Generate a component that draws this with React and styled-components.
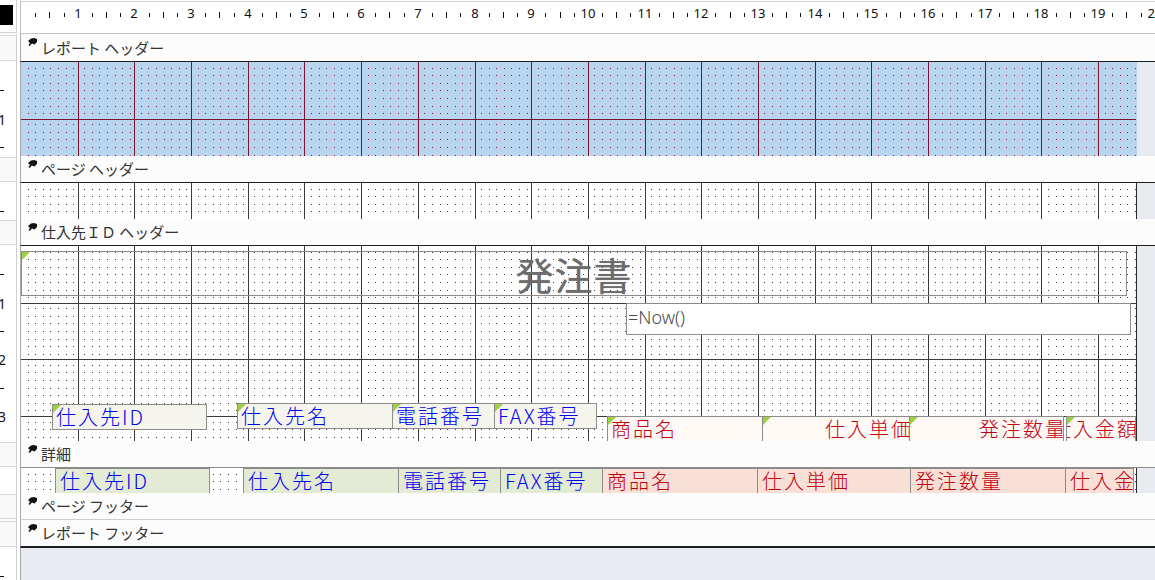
import React, { useMemo } from 'react';
import styled, { createGlobalStyle } from 'styled-components';

const CM = 56.69;
const SURFACE_W = 1115;
const JP = `"Noto Sans CJK JP", "Noto Sans", sans-serif`;
const UI = `"Noto Sans", "Liberation Sans", sans-serif`;

const GlobalStyle = createGlobalStyle`
  html, body { margin: 0; padding: 0; background: #fff; }
  body { overflow: hidden; }
`;

const Page = styled.div`
  width: 1155px;
  height: 580px;
  overflow: hidden;
  display: flex;
  flex-direction: column;
  background: #fff;
  font-family: ${UI};
`;

const Row = styled.div`
  flex: none;
  height: ${p => p.$h}px;
  display: grid;
  grid-template-columns: 17px 1fr;
  column-gap: 3px;
`;

const Corner = styled.div`
  height: 33px;
  box-sizing: border-box;
  border-right: 1px solid #d0d0d0;
  border-bottom: 1px solid #d0d0d0;
  padding-top: 5px;
`;

const CornerMark = styled.div`
  width: 13px;
  height: 20px;
  background: #000;
`;

const TopRuler = styled.div`
  position: relative;
  margin-top: 1px;
  height: 33px;
  box-sizing: border-box;
  border-top: 1px solid #d4d4d4;
  border-bottom: 1px solid #c6c6c6;
  border-left: 1px solid #bdbdbd;
  overflow: hidden;
  background: #fff;
`;

const RulerNum = styled.span`
  position: absolute;
  top: 3px;
  transform: translateX(-50%);
  font-size: 13px;
  line-height: 16px;
  color: #111;
`;

const TickLayer = styled.svg`
  position: absolute;
  left: 0;
  top: 0;
`;

const LeftCell = styled.div`
  position: relative;
  overflow: hidden;
  border-right: 1px solid #d0d0d0;
  display: flex;
  flex-direction: column;
  background: #fff;
`;

const RulerBox = styled.div`
  flex: 1;
  margin: 1px 0;
  border-top: 1px solid #d8d8d8;
  border-bottom: 1px solid #d8d8d8;
  background: #f8f8f8;
`;

const RulerDash = styled.span`
  position: absolute;
  left: 0;
  width: 4px;
  height: 1px;
  background: #111;
`;

const RulerDigit = styled.span`
  position: absolute;
  left: 2px;
  transform: translate(-50%, -45%);
  font-size: 14px;
  line-height: 14px;
  color: #111;
`;

const Bar = styled.div`
  height: ${p => p.$h}px;
  border-left: 1px solid #a8a8a8;
  border-bottom: ${p => p.$lw}px solid ${p => p.$line};
  background: #fcfcfc;
  display: flex;
  align-items: center;
  padding-left: 7px;
  gap: 3px;
  font-family: ${JP};
  font-size: 15px;
  color: #333;
  white-space: nowrap;
`;

const IconSvg = styled.svg`
  flex: none;
  align-self: flex-start;
  margin-top: 4px;
`;

const BarTitle = styled.span`
  line-height: 20px;
`;

const BodyLane = styled.div`
  display: flex;
  min-width: 0;
  border-left: 1px solid #a8a8a8;
`;

const Surface = styled.div`
  position: relative;
  flex: none;
  width: ${SURFACE_W + 1}px;
  box-sizing: border-box;
  overflow: hidden;
  background: ${p => p.$bg};
  border-right: 1px solid ${p => p.$edge};
`;

const Gutter = styled.div`
  flex: 1;
  background: #e8ebf0;
`;

const GrayLane = styled.div`
  border-left: 1px solid #a8a8a8;
  background: #e8ebf0;
`;

const GridSvg = styled.svg`
  position: absolute;
  left: 0;
  top: 0;
  shape-rendering: crispEdges;
`;

const Control = styled.div`
  position: absolute;
  left: ${p => p.$x}px;
  top: ${p => p.$y}px;
  width: ${p => p.$w}px;
  height: ${p => p.$h}px;
  box-sizing: border-box;
  display: flex;
  align-items: center;
  overflow: hidden;
  white-space: nowrap;
  border: 1px solid #8c8c8c;
  font-family: ${JP};
`;

const FieldLabel = styled(Control)`
  font-size: 20px;
  font-weight: 300;
  line-height: 1;
  letter-spacing: 2px;
  padding-left: 3px;
  color: ${p => (p.$tone === 'red' ? '#c00010' : '#0000f0')};
  background: ${p => (p.$tone === 'red' ? '#fff9f6' : '#f5f5ee')};
  justify-content: ${p => (p.$right ? 'flex-end' : 'flex-start')};
`;

const FieldBox = styled(Control)`
  font-size: 20px;
  font-weight: 300;
  line-height: 1;
  letter-spacing: 2px;
  padding-left: 4px;
  color: ${p => (p.$tone === 'red' ? '#c00010' : '#0000f0')};
  background: ${p => (p.$tone === 'red' ? '#f9e0d7' : '#e3ebd5')};
`;

const LabelText = styled.span`
  flex: none;
  margin-right: ${p => (p.$right ? '-4px' : '0')};
`;

const TitleLabel = styled(Control)`
  justify-content: center;
  background: transparent;
  font-size: 38px;
  line-height: 1;
  letter-spacing: 1px;
  color: #6c6c6c;
  text-shadow: 0 0 1px rgba(80, 80, 80, 0.55);
`;

const ExprBox = styled(Control)`
  align-items: flex-start;
  padding: 1px 0 0 1px;
  background: #fff;
  font-family: ${UI};
  font-size: 18px;
  font-weight: 300;
  line-height: 24px;
  color: #4a4a4a;
`;

const Tag = styled.span`
  position: absolute;
  left: 0;
  top: 0;
  width: 0;
  height: 0;
  border-top: 8px solid #9fcf45;
  border-right: 8px solid transparent;
`;

const SectionIcon = () => (
  <IconSvg width="10" height="9" viewBox="0 0 10 9">
    <path d="M0 3L3 0.5L6 0L9 1L9 4L6.5 6.5L4 5.5L1.5 8L0.5 7L2 5Z" fill="#111" />
  </IconSvg>
);

function TopRulerView() {
  const ticks = useMemo(() => {
    let d = '';
    for (let k = 0; k <= 20; k++) {
      for (let q = 1; q <= 3; q++) {
        const x = Math.round((k + q / 4) * CM);
        if (x >= 1134) continue;
        d += q === 2 ? `M${x} 10h1v6h-1z` : `M${x} 11h1v4h-1z`;
      }
    }
    return d;
  }, []);
  const nums = [];
  for (let k = 1; k <= 20; k++) nums.push(k);
  return (
    <TopRuler>
      <TickLayer width="1134" height="31">
        <path d={ticks} fill="#111" />
      </TickLayer>
      {nums.map(k => (
        <RulerNum key={k} style={{ left: Math.round(k * CM) }}>{k}</RulerNum>
      ))}
    </TopRuler>
  );
}

function LeftMarks({ h }) {
  const marks = [];
  for (let t = 1; (t * CM) / 2 < h; t++) {
    const y = Math.round((t * CM) / 2);
    if (t % 2 === 0) marks.push(<RulerDigit key={t} style={{ top: y }}>{t / 2}</RulerDigit>);
    else marks.push(<RulerDash key={t} style={{ top: y }} />);
  }
  return <>{marks}</>;
}

function GridLayer({ h, dot, line }) {
  const { dots, lines } = useMemo(() => {
    const w = SURFACE_W;
    const xs = [];
    const ys = [];
    for (let k = 0; k * CM < w; k++)
      for (let i = 0; i < 7; i++) {
        const v = Math.round(k * CM + 6.5 + 7.6 * i);
        if (v < w) xs.push(v);
      }
    for (let k = 0; k * CM < h; k++)
      for (let i = 0; i < 7; i++) {
        const v = Math.round(k * CM + 5.5 + 7.6 * i);
        if (v < h) ys.push(v);
      }
    let dd = '';
    for (const y of ys) for (const x of xs) dd += `M${x} ${y}h1v1h-1z`;
    let ll = '';
    for (let k = 1; k * CM < w; k++) {
      const x = Math.round(k * CM);
      ll += `M${x} 0h1v${h}h-1z`;
    }
    for (let k = 1; k * CM < h; k++) {
      const y = Math.round(k * CM);
      ll += `M0 ${y}h${w}v1h-${w}z`;
    }
    return { dots: dd, lines: ll };
  }, [h]);
  return (
    <GridSvg width={SURFACE_W} height={h}>
      <path d={dots} fill={dot} />
      <path d={lines} fill={line} />
    </GridSvg>
  );
}

const HEADER_LABELS = [
  { text: '仕入先ID', x: 31, y: 158, w: 155, tone: 'blue' },
  { text: '仕入先名', x: 216, y: 157, w: 156, tone: 'blue' },
  { text: '電話番号', x: 371, y: 157, w: 103, tone: 'blue' },
  { text: 'FAX番号', x: 473, y: 157, w: 103, tone: 'blue' },
  { text: '商品名', x: 586, y: 170, w: 156, tone: 'red' },
  { text: '仕入単価', x: 741, y: 170, w: 148, tone: 'red', right: true },
  { text: '発注数量', x: 888, y: 170, w: 155, tone: 'red', right: true },
  { text: '仕入金額', x: 1045, y: 170, w: 70, tone: 'red', right: true },
];

const DETAIL_FIELDS = [
  { text: '仕入先ID', x: 34, w: 155, tone: 'blue' },
  { text: '仕入先名', x: 222, w: 156, tone: 'blue' },
  { text: '電話番号', x: 377, w: 103, tone: 'blue' },
  { text: 'FAX番号', x: 479, w: 103, tone: 'blue' },
  { text: '商品名', x: 581, w: 156, tone: 'red' },
  { text: '仕入単価', x: 736, w: 154, tone: 'red' },
  { text: '発注数量', x: 889, w: 156, tone: 'red' },
  { text: '仕入金額', x: 1044, w: 69, tone: 'red' },
];

function GroupHeaderContent() {
  return (
    <>
      <TitleLabel $x={0} $y={5} $w={1106} $h={45}>
        <Tag />
        発注書
      </TitleLabel>
      <ExprBox $x={605} $y={57} $w={505} $h={32}>=Now()</ExprBox>
      {HEADER_LABELS.map(l => (
        <FieldLabel key={l.text} $x={l.x} $y={l.y} $w={l.w} $h={26} $tone={l.tone} $right={l.right}>
          <Tag />
          <LabelText $right={l.right}>{l.text}</LabelText>
        </FieldLabel>
      ))}
    </>
  );
}

function DetailContent() {
  return (
    <>
      {DETAIL_FIELDS.map(f => (
        <FieldBox key={f.text} $x={f.x} $y={0} $w={f.w} $h={26} $tone={f.tone}>
          <LabelText>{f.text}</LabelText>
        </FieldBox>
      ))}
    </>
  );
}

const TONES = {
  blue: { bg: '#b9d4ef', edge: '#b9d4ef', dot: '#8d1838', line: '#7a1232' },
  plain: { bg: '#ffffff', edge: '#2a2a2a', dot: '#3c3c3c', line: '#3a3a3a' },
};

const SECTIONS = [
  { name: 'レポート ヘッダー', barH: 27, line: '#1e1e1e', lineW: 1, body: { h: 94, tone: 'blue' } },
  { name: 'ページ ヘッダー', barH: 26, line: '#1e1e1e', lineW: 1, body: { h: 36, tone: 'plain' } },
  { name: '仕入先ＩＤ ヘッダー', barH: 26, line: '#1e1e1e', lineW: 1, body: { h: 195, tone: 'plain', content: 'group' } },
  { name: '詳細', barH: 26, line: '#8a8a8a', lineW: 1, body: { h: 25, tone: 'plain', content: 'detail' } },
  { name: 'ページ フッター', barH: 26, line: '#cdcdcd', lineW: 1 },
  { name: 'レポート フッター', barH: 26, line: '#1e1e1e', lineW: 2 },
];

export default function App() {
  return (
    <>
      <GlobalStyle />
      <Page>
        <Row $h={34}>
          <Corner>
            <CornerMark />
          </Corner>
          <TopRulerView />
        </Row>
        {SECTIONS.map(s => {
          const tone = s.body ? TONES[s.body.tone] : null;
          return (
            <React.Fragment key={s.name}>
              <Row $h={s.barH + s.lineW}>
                <LeftCell>
                  <RulerBox />
                </LeftCell>
                <Bar $h={s.barH} $line={s.line} $lw={s.lineW}>
                  <SectionIcon />
                  <BarTitle>{s.name}</BarTitle>
                </Bar>
              </Row>
              {s.body && (
                <Row $h={s.body.h}>
                  <LeftCell>
                    <LeftMarks h={s.body.h} />
                  </LeftCell>
                  <BodyLane>
                    <Surface $bg={tone.bg} $edge={tone.edge}>
                      <GridLayer h={s.body.h} dot={tone.dot} line={tone.line} />
                      {s.body.content === 'group' && <GroupHeaderContent />}
                      {s.body.content === 'detail' && <DetailContent />}
                    </Surface>
                    <Gutter />
                  </BodyLane>
                </Row>
              )}
            </React.Fragment>
          );
        })}
        <Row $h={32}>
          <LeftCell>
            <LeftMarks h={32} />
          </LeftCell>
          <GrayLane />
        </Row>
      </Page>
    </>
  );
}
